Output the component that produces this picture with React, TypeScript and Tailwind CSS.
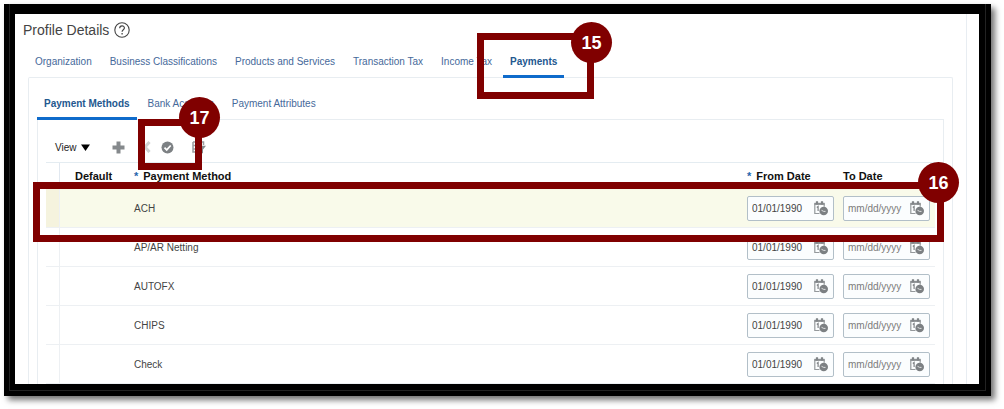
import React, { useState } from 'react';

const methods = ['ACH', 'AP/AR Netting', 'AUTOFX', 'CHIPS', 'Check'];

const profileTabs = [
  'Organization',
  'Business Classifications',
  'Products and Services',
  'Transaction Tax',
  'Income Tax',
  'Payments',
];

const paymentTabs = ['Payment Methods', 'Bank Accounts', 'Payment Attributes'];

interface CalloutProps {
  label: string;
  className: string;
  badgeClassName: string;
}

function Callout({ label, className, badgeClassName }: CalloutProps) {
  return (
    <div className={`pointer-events-none absolute z-10 border-[7px] border-[#800000] ${className}`}>
      <span
        className={`absolute flex size-[41px] items-center justify-center rounded-full bg-[#800000] text-lg font-bold text-white ${badgeClassName}`}
      >
        {label}
      </span>
    </div>
  );
}

interface TabProps {
  label: string;
  selected: boolean;
  onSelect: () => void;
}

function Tab({ label, selected, onSelect }: TabProps) {
  return (
    <button
      type="button"
      role="tab"
      aria-selected={selected}
      onClick={onSelect}
      className={`h-8 whitespace-nowrap border-b-3 px-[7px] pt-px text-[10px] ${
        selected ? 'border-[#0f6bcb] font-bold text-[#23588f]' : 'border-transparent text-[#46699a]'
      }`}
    >
      {label}
    </button>
  );
}

function CalendarIcon() {
  return (
    <svg viewBox="0 0 14 15" className="h-[15px] w-[14px]" fill="none" aria-hidden="true">
      <path d="M5.5 12.5H.8V2.8h9.4v3" stroke="#95999c" strokeWidth="1.2" />
      <path d="M.4 2.8h10.2" stroke="#8b8f92" strokeWidth="2" />
      <path d="M3 .3v3.200M8 .3v3.200" stroke="#808487" strokeWidth="2.200" />
      <path d="M2.800 6.400l1.300-.9v4.600" stroke="#808487" strokeWidth="1.200" />
      <circle cx="9.700" cy="10" r="4.300" fill="#7c8083" />
      <path d="M7.500 9.300l2.200 1.100h1.800" stroke="#dfe1e2" strokeWidth="1" />
    </svg>
  );
}

function DateField({ label, initial }: { label: string; initial: string }) {
  const [value, setValue] = useState(initial);

  return (
    <div className="flex h-[25px] w-[87px] items-center rounded-xs border border-[#b2bfc8] bg-[#fbfdfe] pl-1 pr-[5px]">
      <input
        type="text"
        aria-label={label}
        placeholder="mm/dd/yyyy"
        value={value}
        onChange={e => setValue(e.target.value)}
        className="w-0 min-w-0 flex-1 text-[10px] text-[#444] outline-none placeholder:text-[#7b7b7b]"
      />
      <button type="button" aria-label={`Select ${label}`}>
        <CalendarIcon />
      </button>
    </div>
  );
}

function Toolbar() {
  return (
    <div className="relative flex h-[42px] items-center pl-[9px] pt-3">
      <button type="button" className="flex items-center gap-1 text-[10px] text-[#222]">
        View
        <svg viewBox="0 0 9 7" className="h-[7px] w-[9px]" aria-hidden="true">
          <path d="M0 .5h9L4.500 7z" fill="#000" />
        </svg>
      </button>
      <button type="button" aria-label="Add row" className="ml-[22px]">
        <svg viewBox="0 0 13 13" className="size-[13px]" aria-hidden="true">
          <path d="M4.500.5h4v4h4v4h-4v4h-4v-4h-4v-4h4z" fill="#85898c" />
        </svg>
      </button>
      <button type="button" aria-label="Delete row" className="ml-[14px]">
        <svg viewBox="0 0 12 12" className="size-3" aria-hidden="true">
          <path d="M1.500 1l9 10M10.500 1l-9 10" stroke="#d0d2d3" strokeWidth="3" />
        </svg>
      </button>
      <button type="button" aria-label="Set as default" className="ml-[10px]">
        <svg viewBox="0 0 13 13" className="size-[13px]" fill="none" aria-hidden="true">
          <circle cx="6.500" cy="6.500" r="6" fill="#7d8184" />
          <path d="M3.500 6.700l2.200 2.200 4-4.400" stroke="#fff" strokeWidth="1.700" />
        </svg>
      </button>
      <button type="button" aria-label="Query by example" className="ml-[18px]">
        <svg viewBox="0 0 14 13" className="h-[13px] w-[14px]" aria-hidden="true">
          <path d="M1 1h10.500v3M1 1v10h5M1 4.500h4M1 8h4" fill="none" stroke="#9a9da0" strokeWidth="1.500" />
          <path d="M5 4.800h9L11 8.500V12.500L8 11V8.500z" fill="#85898c" />
        </svg>
      </button>
      <Callout
        label="17"
        className="left-[92px] -top-px h-[51px] w-16"
        badgeClassName="-right-[25px] -top-[29px]"
      />
    </div>
  );
}

function MethodsTable() {
  return (
    <div className="relative">
      <table className="w-full table-fixed border-separate border-spacing-0 border-t border-[#e4ecf1] text-left">
        <thead>
          <tr className="h-[26px] text-[11px] text-[#111]">
            <td className="w-[14px] border-r border-[#e1e8f0]" />
            <th className="w-[74px] p-0 pl-[15px]">Default</th>
            <th className="p-0">
              <span className="mr-[5px] text-[#1f66ad]">*</span>
              Payment Method
            </th>
            <th className="w-24 p-0">
              <span className="mr-[5px] text-[#1f66ad]">*</span>
              From Date
            </th>
            <th className="w-[92px] p-0">To Date</th>
          </tr>
        </thead>
        <tbody className="text-[10px] text-[#444] *:*:border-b *:*:border-[#edf0f3] *:*:p-0">
          {methods.map((m, i) => (
            <tr key={m} className={`h-[39px] ${i === 0 ? 'bg-[#f9faea]' : ''}`}>
              <td className={`border-r ${i === 0 ? 'bg-[#f5f3de]' : ''}`} />
              <td />
              <td>{m}</td>
              <td>
                <DateField label={`${m} from date`} initial="01/01/1990" />
              </td>
              <td>
                <DateField label={`${m} to date`} initial="" />
              </td>
            </tr>
          ))}
        </tbody>
      </table>
      <Callout
        label="16"
        className="-left-[13px] -right-[9px] top-5 h-[60px]"
        badgeClassName="-right-[22px] -top-[27px]"
      />
    </div>
  );
}

export default function App() {
  const [profileTab, setProfileTab] = useState('Payments');
  const [paymentTab, setPaymentTab] = useState('Payment Methods');

  return (
    <main className="pb-[13px] pl-1 pr-[13px] pt-1 font-['Liberation_Sans',Arial,sans-serif]">
      <div className="bg-black px-[5px] pb-[5px] shadow-[4px_4px_6px_rgba(0,0,0,0.55)]">
        <div className="border-x border-b border-[#222] pb-[6px] pl-[5px] pr-[6px] pt-[10px]">
          <div className="bg-white pr-3">
            <div className="border-r border-[#e8edf2] pl-[13px] pr-[13px]">
              <header className="-ml-[5px] flex h-8 items-center gap-[5px]">
                <h1 className="text-sm text-[#444]">Profile Details</h1>
                <button type="button" aria-label="Help">
                  <svg viewBox="0 0 16 16" className="size-4" fill="none" stroke="#444" aria-hidden="true">
                    <circle cx="8" cy="8" r="7.200" strokeWidth="1.100" />
                    <path d="M5.700 6.200c0-3.200 4.700-3.100 4.700-.2 0 1.700-2.300 1.700-2.300 3.800" strokeWidth="1.200" />
                    <path d="M8.100 11v1.500" strokeWidth="1.300" />
                  </svg>
                </button>
              </header>

              <div role="tablist" className="relative flex gap-1">
                {profileTabs.map(t => (
                  <div key={t} className="relative">
                    <Tab label={t} selected={t === profileTab} onSelect={() => setProfileTab(t)} />
                    {t === 'Payments' && (
                      <Callout
                        label="15"
                        className="-left-[26px] -top-[13px] h-[66px] w-[117px]"
                        badgeClassName="-right-[25px] -top-[18px]"
                      />
                    )}
                  </div>
                ))}
              </div>

              <section className="-mt-px rounded-t-xs border-x border-t border-[#e8edf1] px-2 pt-[10px]">
                <div role="tablist" className="relative flex gap-1">
                  {paymentTabs.map(t => (
                    <Tab key={t} label={t} selected={t === paymentTab} onSelect={() => setPaymentTab(t)} />
                  ))}
                </div>
                <div className="-mt-px border-x border-t border-[#e8edf1] px-2">
                  <Toolbar />
                  <MethodsTable />
                </div>
              </section>
            </div>
          </div>
        </div>
      </div>
    </main>
  );
}
